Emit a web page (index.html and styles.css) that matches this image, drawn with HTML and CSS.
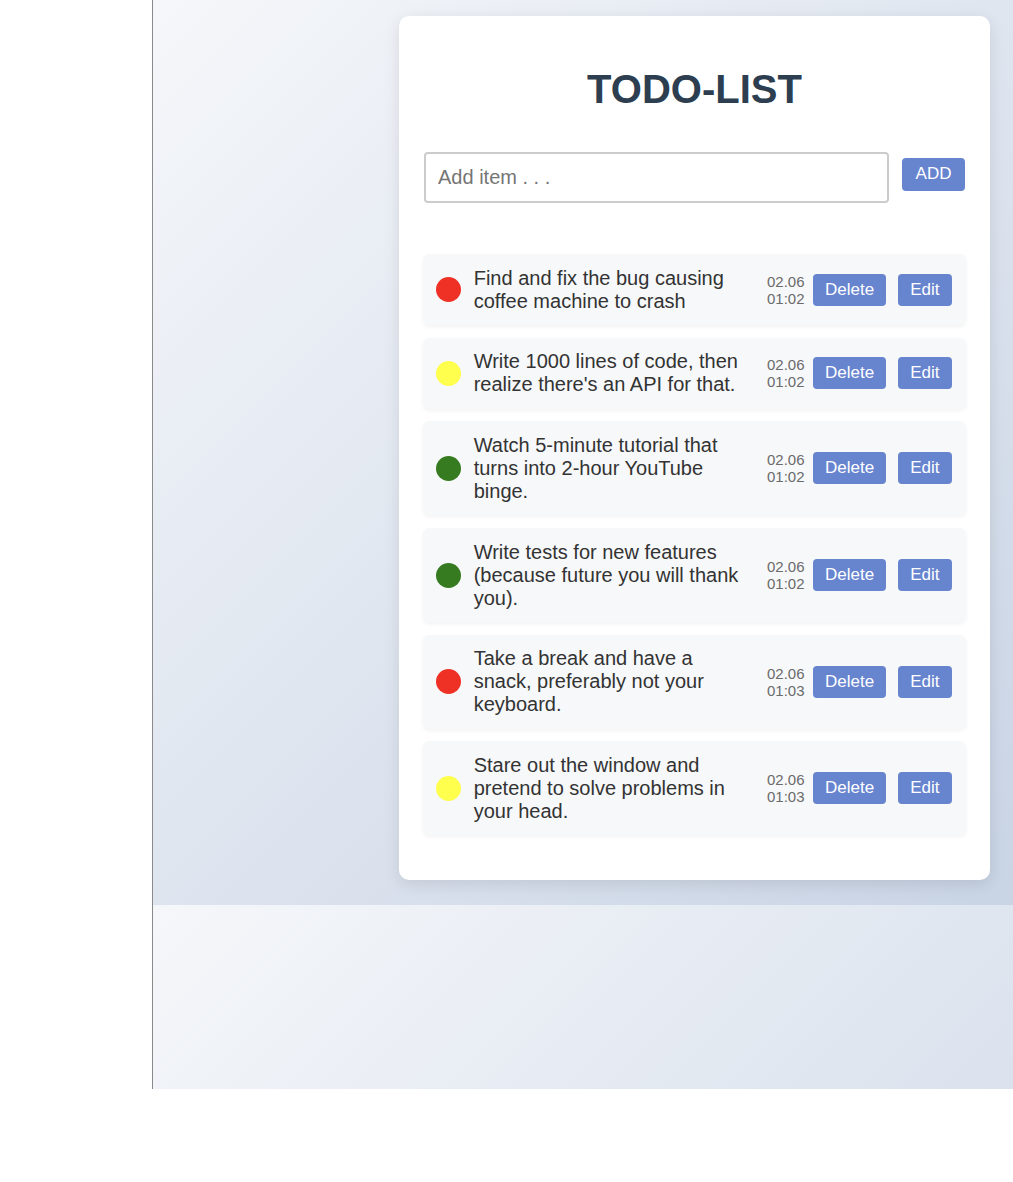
FILE: index.html
```html
<!DOCTYPE html>
<html lang="en">
<head>
<meta charset="utf-8">
<title>TODO-LIST</title>
<link rel="stylesheet" href="styles.css">
</head>
<body>
<div class="frame">
  <div class="card">
    <h1 class="title">TODO-LIST</h1>
    <form class="add-form">
      <input class="add-input" type="text" placeholder="Add item . . .">
      <button class="btn btn-add" type="button">ADD</button>
    </form>
    <ul class="todo-list">
      <li class="todo">
        <span class="dot dot-red"></span>
        <span class="todo-text">Find and fix the bug causing coffee machine to crash</span>
        <span class="todo-date">02.06<br>01:02</span>
        <button class="btn btn-delete" type="button">Delete</button>
        <button class="btn btn-edit" type="button">Edit</button>
      </li>
      <li class="todo">
        <span class="dot dot-yellow"></span>
        <span class="todo-text">Write 1000 lines of code, then realize there's an API for that.</span>
        <span class="todo-date">02.06<br>01:02</span>
        <button class="btn btn-delete" type="button">Delete</button>
        <button class="btn btn-edit" type="button">Edit</button>
      </li>
      <li class="todo">
        <span class="dot dot-green"></span>
        <span class="todo-text">Watch 5-minute tutorial that turns into 2-hour YouTube binge.</span>
        <span class="todo-date">02.06<br>01:02</span>
        <button class="btn btn-delete" type="button">Delete</button>
        <button class="btn btn-edit" type="button">Edit</button>
      </li>
      <li class="todo">
        <span class="dot dot-green"></span>
        <span class="todo-text">Write tests for new features (because future you will thank you).</span>
        <span class="todo-date">02.06<br>01:02</span>
        <button class="btn btn-delete" type="button">Delete</button>
        <button class="btn btn-edit" type="button">Edit</button>
      </li>
      <li class="todo">
        <span class="dot dot-red"></span>
        <span class="todo-text">Take a break and have a snack, preferably not your keyboard.</span>
        <span class="todo-date">02.06<br>01:03</span>
        <button class="btn btn-delete" type="button">Delete</button>
        <button class="btn btn-edit" type="button">Edit</button>
      </li>
      <li class="todo">
        <span class="dot dot-yellow"></span>
        <span class="todo-text">Stare out the window and pretend to solve problems in your head.</span>
        <span class="todo-date">02.06<br>01:03</span>
        <button class="btn btn-delete" type="button">Delete</button>
        <button class="btn btn-edit" type="button">Edit</button>
      </li>
    </ul>
  </div>
</div>
</body>
</html>
```

FILE: styles.css
```css
html, body {
  margin: 0;
  padding: 0;
  background: #ffffff;
  font-family: "Liberation Sans", Arial, sans-serif;
}

.frame {
  margin-left: 152px;
  border-left: 1px solid #8a8a8a;
  height: 1089px;
  box-sizing: border-box;
  padding: 16px 0 0 246px;
  background-image: linear-gradient(135deg, #f5f7fa 0%, #c3cfe2 100%);
  background-size: 1083px 905px;
  background-repeat: repeat-y;
}

.card {
  width: 591px;
  box-sizing: border-box;
  background: #ffffff;
  border-radius: 10px;
  padding: 24px;
  box-shadow: 0 4px 16px rgba(0, 0, 0, 0.1);
}

.title {
  margin: 26.8px 0 40.5px 0;
  font-size: 40px;
  font-weight: bold;
  text-align: center;
  color: #2c3e50;
}

.add-form {
  display: flex;
  align-items: flex-start;
  margin: 0 0 0 1px;
}

.add-input {
  flex: 1;
  min-width: 0;
  height: 51px;
  box-sizing: border-box;
  padding: 12px;
  border: 2px solid #cccccc;
  border-radius: 4px;
  font-family: "Liberation Sans", Arial, sans-serif;
  font-size: 20px;
  color: #333333;
  outline: none;
}

.add-input::placeholder {
  color: #757575;
}

.btn {
  border: none;
  border-radius: 4px;
  background: #6784cf;
  color: #ffffff;
  font-family: "Liberation Sans", Arial, sans-serif;
  font-size: 17px;
  line-height: 20px;
  padding: 6px 12px;
  cursor: pointer;
}

.btn-add {
  margin: 5.7px 1px 0 13px;
  padding: 6.35px 13.5px;
}

.todo-list {
  list-style: none;
  margin: 51px 0 21px 0;
  padding: 0;
  display: flex;
  flex-direction: column;
  gap: 12.6px;
}

.todo {
  display: flex;
  align-items: center;
  padding: 12.5px 14px 12.5px 12.7px;
  background: #f7f8fa;
  border-radius: 6px;
  box-shadow: 0 2px 4px rgba(0, 0, 0, 0.05);
}

.dot {
  flex: 0 0 25px;
  width: 25px;
  height: 25px;
  border-radius: 50%;
  margin-right: 13px;
}

.dot-red { background: #ee3124; }
.dot-yellow { background: #ffff4d; }
.dot-green { background: #367b1f; }

.todo-text {
  flex: 1;
  min-width: 0;
  font-size: 20px;
  color: #333333;
}

.todo-date {
  margin: 0 8.5px 0 12px;
  font-size: 15px;
  color: #6b6b6b;
}

.btn-edit {
  margin-left: 11.5px;
  padding: 6px 12.5px;
}
```
